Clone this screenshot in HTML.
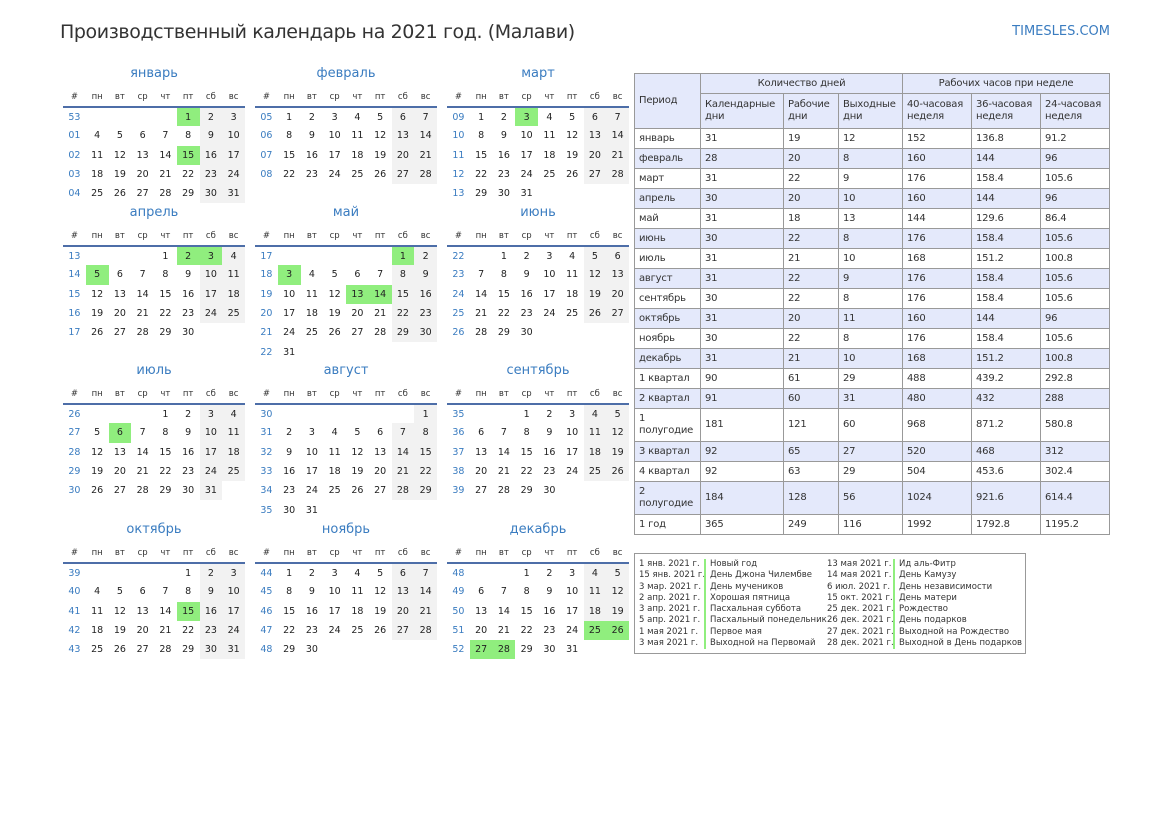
<!DOCTYPE html>
<html><head><meta charset="utf-8"><style>
*{margin:0;padding:0;box-sizing:border-box}
body{width:1169px;height:827px;background:#fff;position:relative;font-family:"DejaVu Sans","Liberation Sans",sans-serif;color:#222;overflow:hidden}
.title{position:absolute;left:60px;top:21px;font-size:19px;color:#333;font-family:"DejaVu Sans",sans-serif;letter-spacing:-0.4px}
.logo{position:absolute;right:59px;top:24px;font-size:13px;color:#3a7cc0}
.m{position:absolute;width:182px}
.m .t{height:23px;line-height:20px;text-align:center;color:#3a7cc0;font-size:13px}
.m table{border-collapse:collapse;table-layout:fixed;width:182px;font-size:9.5px}
.m td{height:19.3px;text-align:center;padding:0}
.m tr.h td{height:20px;border-bottom:2px solid #4d6ea8;font-size:8.5px;color:#333}
.m td.n{color:#3a7cc0}
.m td.w{background:#f2f2f2}
.m td.g{background:#90ee7e}
.st{position:absolute;left:634px;top:73px;width:475px;border-collapse:collapse;font-size:10px;table-layout:fixed;letter-spacing:-0.2px}
.st td{border:1px solid #999;padding:0 4px;height:20px;line-height:12px;color:#333;overflow:hidden}
.st tr.b td{background:#e4e9fb}
.st tr.hd td{background:#e4e9fb}
.lg{position:absolute;left:634px;top:553px;width:392px;height:101px;border:1px solid #999;font-size:8.5px;color:#333}
.lg div{position:absolute;white-space:nowrap}
.lg .bar{border-left:2px solid #90ee7e;padding-left:4px}
</style></head><body>
<div class="title">Производственный календарь на 2021 год. (Малави)</div>
<div class="logo">TIMESLES.COM</div>

<div class="m" style="left:63px;top:64px"><div class="t">январь</div><table>
<tr class="h"><td>#</td><td>пн</td><td>вт</td><td>ср</td><td>чт</td><td>пт</td><td>сб</td><td>вс</td></tr>
<tr><td class="n">53</td><td></td><td></td><td></td><td></td><td class="g">1</td><td class="w">2</td><td class="w">3</td></tr>
<tr><td class="n">01</td><td>4</td><td>5</td><td>6</td><td>7</td><td>8</td><td class="w">9</td><td class="w">10</td></tr>
<tr><td class="n">02</td><td>11</td><td>12</td><td>13</td><td>14</td><td class="g">15</td><td class="w">16</td><td class="w">17</td></tr>
<tr><td class="n">03</td><td>18</td><td>19</td><td>20</td><td>21</td><td>22</td><td class="w">23</td><td class="w">24</td></tr>
<tr><td class="n">04</td><td>25</td><td>26</td><td>27</td><td>28</td><td>29</td><td class="w">30</td><td class="w">31</td></tr>
</table></div>

<div class="m" style="left:255px;top:64px"><div class="t">февраль</div><table>
<tr class="h"><td>#</td><td>пн</td><td>вт</td><td>ср</td><td>чт</td><td>пт</td><td>сб</td><td>вс</td></tr>
<tr><td class="n">05</td><td>1</td><td>2</td><td>3</td><td>4</td><td>5</td><td class="w">6</td><td class="w">7</td></tr>
<tr><td class="n">06</td><td>8</td><td>9</td><td>10</td><td>11</td><td>12</td><td class="w">13</td><td class="w">14</td></tr>
<tr><td class="n">07</td><td>15</td><td>16</td><td>17</td><td>18</td><td>19</td><td class="w">20</td><td class="w">21</td></tr>
<tr><td class="n">08</td><td>22</td><td>23</td><td>24</td><td>25</td><td>26</td><td class="w">27</td><td class="w">28</td></tr>
</table></div>

<div class="m" style="left:447px;top:64px"><div class="t">март</div><table>
<tr class="h"><td>#</td><td>пн</td><td>вт</td><td>ср</td><td>чт</td><td>пт</td><td>сб</td><td>вс</td></tr>
<tr><td class="n">09</td><td>1</td><td>2</td><td class="g">3</td><td>4</td><td>5</td><td class="w">6</td><td class="w">7</td></tr>
<tr><td class="n">10</td><td>8</td><td>9</td><td>10</td><td>11</td><td>12</td><td class="w">13</td><td class="w">14</td></tr>
<tr><td class="n">11</td><td>15</td><td>16</td><td>17</td><td>18</td><td>19</td><td class="w">20</td><td class="w">21</td></tr>
<tr><td class="n">12</td><td>22</td><td>23</td><td>24</td><td>25</td><td>26</td><td class="w">27</td><td class="w">28</td></tr>
<tr><td class="n">13</td><td>29</td><td>30</td><td>31</td><td></td><td></td><td></td><td></td></tr>
</table></div>

<div class="m" style="left:63px;top:203px"><div class="t">апрель</div><table>
<tr class="h"><td>#</td><td>пн</td><td>вт</td><td>ср</td><td>чт</td><td>пт</td><td>сб</td><td>вс</td></tr>
<tr><td class="n">13</td><td></td><td></td><td></td><td>1</td><td class="g">2</td><td class="g">3</td><td class="w">4</td></tr>
<tr><td class="n">14</td><td class="g">5</td><td>6</td><td>7</td><td>8</td><td>9</td><td class="w">10</td><td class="w">11</td></tr>
<tr><td class="n">15</td><td>12</td><td>13</td><td>14</td><td>15</td><td>16</td><td class="w">17</td><td class="w">18</td></tr>
<tr><td class="n">16</td><td>19</td><td>20</td><td>21</td><td>22</td><td>23</td><td class="w">24</td><td class="w">25</td></tr>
<tr><td class="n">17</td><td>26</td><td>27</td><td>28</td><td>29</td><td>30</td><td></td><td></td></tr>
</table></div>

<div class="m" style="left:255px;top:203px"><div class="t">май</div><table>
<tr class="h"><td>#</td><td>пн</td><td>вт</td><td>ср</td><td>чт</td><td>пт</td><td>сб</td><td>вс</td></tr>
<tr><td class="n">17</td><td></td><td></td><td></td><td></td><td></td><td class="g">1</td><td class="w">2</td></tr>
<tr><td class="n">18</td><td class="g">3</td><td>4</td><td>5</td><td>6</td><td>7</td><td class="w">8</td><td class="w">9</td></tr>
<tr><td class="n">19</td><td>10</td><td>11</td><td>12</td><td class="g">13</td><td class="g">14</td><td class="w">15</td><td class="w">16</td></tr>
<tr><td class="n">20</td><td>17</td><td>18</td><td>19</td><td>20</td><td>21</td><td class="w">22</td><td class="w">23</td></tr>
<tr><td class="n">21</td><td>24</td><td>25</td><td>26</td><td>27</td><td>28</td><td class="w">29</td><td class="w">30</td></tr>
<tr><td class="n">22</td><td>31</td><td></td><td></td><td></td><td></td><td></td><td></td></tr>
</table></div>

<div class="m" style="left:447px;top:203px"><div class="t">июнь</div><table>
<tr class="h"><td>#</td><td>пн</td><td>вт</td><td>ср</td><td>чт</td><td>пт</td><td>сб</td><td>вс</td></tr>
<tr><td class="n">22</td><td></td><td>1</td><td>2</td><td>3</td><td>4</td><td class="w">5</td><td class="w">6</td></tr>
<tr><td class="n">23</td><td>7</td><td>8</td><td>9</td><td>10</td><td>11</td><td class="w">12</td><td class="w">13</td></tr>
<tr><td class="n">24</td><td>14</td><td>15</td><td>16</td><td>17</td><td>18</td><td class="w">19</td><td class="w">20</td></tr>
<tr><td class="n">25</td><td>21</td><td>22</td><td>23</td><td>24</td><td>25</td><td class="w">26</td><td class="w">27</td></tr>
<tr><td class="n">26</td><td>28</td><td>29</td><td>30</td><td></td><td></td><td></td><td></td></tr>
</table></div>

<div class="m" style="left:63px;top:361px"><div class="t">июль</div><table>
<tr class="h"><td>#</td><td>пн</td><td>вт</td><td>ср</td><td>чт</td><td>пт</td><td>сб</td><td>вс</td></tr>
<tr><td class="n">26</td><td></td><td></td><td></td><td>1</td><td>2</td><td class="w">3</td><td class="w">4</td></tr>
<tr><td class="n">27</td><td>5</td><td class="g">6</td><td>7</td><td>8</td><td>9</td><td class="w">10</td><td class="w">11</td></tr>
<tr><td class="n">28</td><td>12</td><td>13</td><td>14</td><td>15</td><td>16</td><td class="w">17</td><td class="w">18</td></tr>
<tr><td class="n">29</td><td>19</td><td>20</td><td>21</td><td>22</td><td>23</td><td class="w">24</td><td class="w">25</td></tr>
<tr><td class="n">30</td><td>26</td><td>27</td><td>28</td><td>29</td><td>30</td><td class="w">31</td><td></td></tr>
</table></div>

<div class="m" style="left:255px;top:361px"><div class="t">август</div><table>
<tr class="h"><td>#</td><td>пн</td><td>вт</td><td>ср</td><td>чт</td><td>пт</td><td>сб</td><td>вс</td></tr>
<tr><td class="n">30</td><td></td><td></td><td></td><td></td><td></td><td></td><td class="w">1</td></tr>
<tr><td class="n">31</td><td>2</td><td>3</td><td>4</td><td>5</td><td>6</td><td class="w">7</td><td class="w">8</td></tr>
<tr><td class="n">32</td><td>9</td><td>10</td><td>11</td><td>12</td><td>13</td><td class="w">14</td><td class="w">15</td></tr>
<tr><td class="n">33</td><td>16</td><td>17</td><td>18</td><td>19</td><td>20</td><td class="w">21</td><td class="w">22</td></tr>
<tr><td class="n">34</td><td>23</td><td>24</td><td>25</td><td>26</td><td>27</td><td class="w">28</td><td class="w">29</td></tr>
<tr><td class="n">35</td><td>30</td><td>31</td><td></td><td></td><td></td><td></td><td></td></tr>
</table></div>

<div class="m" style="left:447px;top:361px"><div class="t">сентябрь</div><table>
<tr class="h"><td>#</td><td>пн</td><td>вт</td><td>ср</td><td>чт</td><td>пт</td><td>сб</td><td>вс</td></tr>
<tr><td class="n">35</td><td></td><td></td><td>1</td><td>2</td><td>3</td><td class="w">4</td><td class="w">5</td></tr>
<tr><td class="n">36</td><td>6</td><td>7</td><td>8</td><td>9</td><td>10</td><td class="w">11</td><td class="w">12</td></tr>
<tr><td class="n">37</td><td>13</td><td>14</td><td>15</td><td>16</td><td>17</td><td class="w">18</td><td class="w">19</td></tr>
<tr><td class="n">38</td><td>20</td><td>21</td><td>22</td><td>23</td><td>24</td><td class="w">25</td><td class="w">26</td></tr>
<tr><td class="n">39</td><td>27</td><td>28</td><td>29</td><td>30</td><td></td><td></td><td></td></tr>
</table></div>

<div class="m" style="left:63px;top:520px"><div class="t">октябрь</div><table>
<tr class="h"><td>#</td><td>пн</td><td>вт</td><td>ср</td><td>чт</td><td>пт</td><td>сб</td><td>вс</td></tr>
<tr><td class="n">39</td><td></td><td></td><td></td><td></td><td>1</td><td class="w">2</td><td class="w">3</td></tr>
<tr><td class="n">40</td><td>4</td><td>5</td><td>6</td><td>7</td><td>8</td><td class="w">9</td><td class="w">10</td></tr>
<tr><td class="n">41</td><td>11</td><td>12</td><td>13</td><td>14</td><td class="g">15</td><td class="w">16</td><td class="w">17</td></tr>
<tr><td class="n">42</td><td>18</td><td>19</td><td>20</td><td>21</td><td>22</td><td class="w">23</td><td class="w">24</td></tr>
<tr><td class="n">43</td><td>25</td><td>26</td><td>27</td><td>28</td><td>29</td><td class="w">30</td><td class="w">31</td></tr>
</table></div>

<div class="m" style="left:255px;top:520px"><div class="t">ноябрь</div><table>
<tr class="h"><td>#</td><td>пн</td><td>вт</td><td>ср</td><td>чт</td><td>пт</td><td>сб</td><td>вс</td></tr>
<tr><td class="n">44</td><td>1</td><td>2</td><td>3</td><td>4</td><td>5</td><td class="w">6</td><td class="w">7</td></tr>
<tr><td class="n">45</td><td>8</td><td>9</td><td>10</td><td>11</td><td>12</td><td class="w">13</td><td class="w">14</td></tr>
<tr><td class="n">46</td><td>15</td><td>16</td><td>17</td><td>18</td><td>19</td><td class="w">20</td><td class="w">21</td></tr>
<tr><td class="n">47</td><td>22</td><td>23</td><td>24</td><td>25</td><td>26</td><td class="w">27</td><td class="w">28</td></tr>
<tr><td class="n">48</td><td>29</td><td>30</td><td></td><td></td><td></td><td></td><td></td></tr>
</table></div>

<div class="m" style="left:447px;top:520px"><div class="t">декабрь</div><table>
<tr class="h"><td>#</td><td>пн</td><td>вт</td><td>ср</td><td>чт</td><td>пт</td><td>сб</td><td>вс</td></tr>
<tr><td class="n">48</td><td></td><td></td><td>1</td><td>2</td><td>3</td><td class="w">4</td><td class="w">5</td></tr>
<tr><td class="n">49</td><td>6</td><td>7</td><td>8</td><td>9</td><td>10</td><td class="w">11</td><td class="w">12</td></tr>
<tr><td class="n">50</td><td>13</td><td>14</td><td>15</td><td>16</td><td>17</td><td class="w">18</td><td class="w">19</td></tr>
<tr><td class="n">51</td><td>20</td><td>21</td><td>22</td><td>23</td><td>24</td><td class="g">25</td><td class="g">26</td></tr>
<tr><td class="n">52</td><td class="g">27</td><td class="g">28</td><td>29</td><td>30</td><td>31</td><td></td><td></td></tr>
</table></div>

<table class="st">
<colgroup><col style="width:66px"><col style="width:83px"><col style="width:55px"><col style="width:64px"><col style="width:69px"><col style="width:69px"><col style="width:69px"></colgroup>
<tr class="hd"><td rowspan="2">Период</td><td colspan="3" style="text-align:center">Количество дней</td><td colspan="3" style="text-align:center">Рабочих часов при неделе</td></tr>
<tr class="hd" style="height:35px"><td>Календарные дни</td><td>Рабочие дни</td><td>Выходные дни</td><td>40-часовая неделя</td><td>36-часовая неделя</td><td>24-часовая неделя</td></tr>
<tr><td>январь</td><td>31</td><td>19</td><td>12</td><td>152</td><td>136.8</td><td>91.2</td></tr>
<tr class="b"><td>февраль</td><td>28</td><td>20</td><td>8</td><td>160</td><td>144</td><td>96</td></tr>
<tr><td>март</td><td>31</td><td>22</td><td>9</td><td>176</td><td>158.4</td><td>105.6</td></tr>
<tr class="b"><td>апрель</td><td>30</td><td>20</td><td>10</td><td>160</td><td>144</td><td>96</td></tr>
<tr><td>май</td><td>31</td><td>18</td><td>13</td><td>144</td><td>129.6</td><td>86.4</td></tr>
<tr class="b"><td>июнь</td><td>30</td><td>22</td><td>8</td><td>176</td><td>158.4</td><td>105.6</td></tr>
<tr><td>июль</td><td>31</td><td>21</td><td>10</td><td>168</td><td>151.2</td><td>100.8</td></tr>
<tr class="b"><td>август</td><td>31</td><td>22</td><td>9</td><td>176</td><td>158.4</td><td>105.6</td></tr>
<tr><td>сентябрь</td><td>30</td><td>22</td><td>8</td><td>176</td><td>158.4</td><td>105.6</td></tr>
<tr class="b"><td>октябрь</td><td>31</td><td>20</td><td>11</td><td>160</td><td>144</td><td>96</td></tr>
<tr><td>ноябрь</td><td>30</td><td>22</td><td>8</td><td>176</td><td>158.4</td><td>105.6</td></tr>
<tr class="b"><td>декабрь</td><td>31</td><td>21</td><td>10</td><td>168</td><td>151.2</td><td>100.8</td></tr>
<tr><td style="white-space:nowrap">1 квартал</td><td>90</td><td>61</td><td>29</td><td>488</td><td>439.2</td><td>292.8</td></tr>
<tr class="b"><td style="white-space:nowrap">2 квартал</td><td>91</td><td>60</td><td>31</td><td>480</td><td>432</td><td>288</td></tr>
<tr style="height:33px"><td>1<br>полугодие</td><td>181</td><td>121</td><td>60</td><td>968</td><td>871.2</td><td>580.8</td></tr>
<tr class="b"><td style="white-space:nowrap">3 квартал</td><td>92</td><td>65</td><td>27</td><td>520</td><td>468</td><td>312</td></tr>
<tr><td style="white-space:nowrap">4 квартал</td><td>92</td><td>63</td><td>29</td><td>504</td><td>453.6</td><td>302.4</td></tr>
<tr class="b" style="height:33px"><td>2<br>полугодие</td><td>184</td><td>128</td><td>56</td><td>1024</td><td>921.6</td><td>614.4</td></tr>
<tr><td>1 год</td><td>365</td><td>249</td><td>116</td><td>1992</td><td>1792.8</td><td>1195.2</td></tr>
</table>

<div class="lg">
<div style="left:4px;top:5px;line-height:11.3px">1 янв. 2021 г.<br>15 янв. 2021 г.<br>3 мар. 2021 г.<br>2 апр. 2021 г.<br>3 апр. 2021 г.<br>5 апр. 2021 г.<br>1 мая 2021 г.<br>3 мая 2021 г.</div>
<div class="bar" style="left:69px;top:5px;line-height:11.3px">Новый год<br>День Джона Чилембве<br>День мучеников<br>Хорошая пятница<br>Пасхальная суббота<br>Пасхальный понедельник<br>Первое мая<br>Выходной на Первомай</div>
<div style="left:192px;top:5px;line-height:11.3px">13 мая 2021 г.<br>14 мая 2021 г.<br>6 июл. 2021 г.<br>15 окт. 2021 г.<br>25 дек. 2021 г.<br>26 дек. 2021 г.<br>27 дек. 2021 г.<br>28 дек. 2021 г.</div>
<div class="bar" style="left:258px;top:5px;line-height:11.3px">Ид аль-Фитр<br>День Камузу<br>День независимости<br>День матери<br>Рождество<br>День подарков<br>Выходной на Рождество<br>Выходной в День подарков</div>
</div>
</body></html>
